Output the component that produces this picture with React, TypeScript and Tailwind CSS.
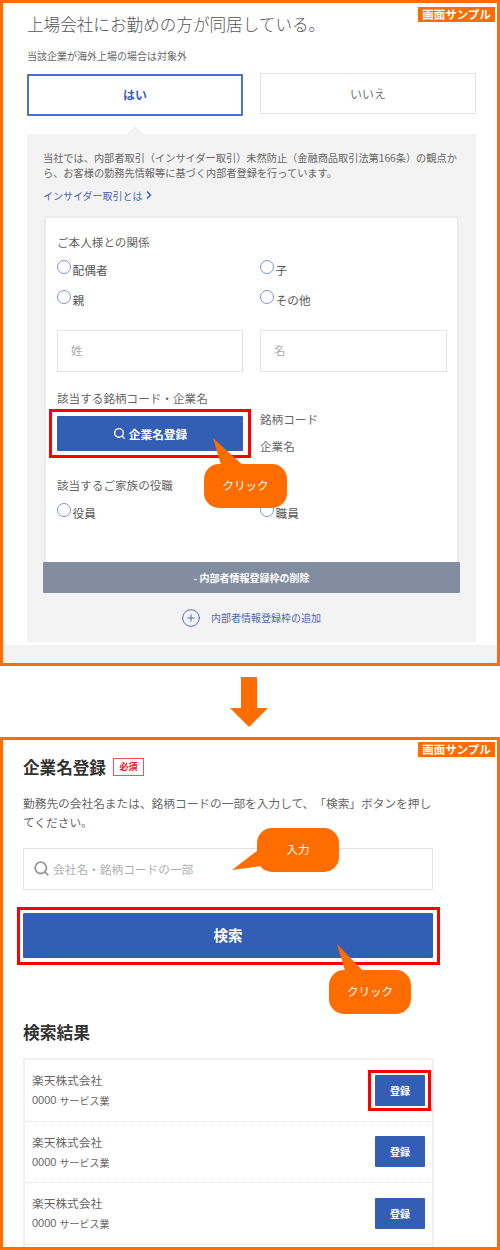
import { Search, ChevronRight, CirclePlus } from "lucide-react";

function SampleTag({ top }: { top: string }) {
  return (
    <div className={`absolute right-[2px] ${top} flex h-[15px] w-[77px] items-center justify-center bg-[#ff6c00] text-[11.5px] font-bold text-[#fff]`}>
      画面サンプル
    </div>
  );
}

function Radio({ label }: { label: string }) {
  return (
    <div className="flex h-[30px] items-center text-[11.7px] text-[#555]">
      <span className="mb-[6px] h-[13.5px] w-[13.5px] rounded-full border border-[#7b95d8] bg-white" />
      <span className="ml-[2px]">{label}</span>
    </div>
  );
}

function ResultRow() {
  return (
    <div className="flex h-[61.5px] items-center justify-between border-b border-dotted border-[#dddddd] pl-[7px] pr-[7px]">
      <div className="text-[#666]">
        <div className="h-[21px] text-[11.7px] leading-[21px]">楽天株式会社</div>
        <div className="flex h-[21px] items-center gap-[3px] text-[10px] leading-[21px]">
          <span className="font-['Liberation_Sans',sans-serif] text-[11px]">0000</span>
          <span>サービス業</span>
        </div>
      </div>
      <div className="flex h-[31px] w-[50px] items-center justify-center rounded-[1px] bg-[#335eb6] text-[10px] font-bold text-white">
        登録
      </div>
    </div>
  );
}

export default function App() {
  return (
    <div className="w-[500px] bg-white font-['Noto_Sans_CJK_JP','Liberation_Sans',sans-serif] [text-spacing-trim:space-all]">
      {/* Upper sample */}
      <section className="relative box-border flex h-[666px] flex-col border-[3px] border-[#ff6c00] bg-[#f3f3f3]">
        <div className="h-[642px] bg-white pl-[24px] pr-[21px]">
          <h1 className="h-[30px] translate-y-[6px] text-[16.6px] font-light leading-[30px] text-[#555]">
            上場会社にお勤めの方が同居している。
          </h1>
          <p className="mt-[13px] h-5 text-[10px] leading-5 text-[#666]">当該企業が海外上場の場合は対象外</p>
          <div className="mt-[7px] grid h-[43px] grid-cols-[216px_216px] items-start gap-x-[17px]">
            <div className="mt-px flex h-[42px] items-center justify-center rounded-[1px] border-2 border-[#4a72c6] text-[12px] font-bold text-[#3f64b8]">
              はい
            </div>
            <div className="flex h-[41px] items-center justify-center border-[1.5px] border-[#e2e2e2] text-[12px] text-[#777]">
              いいえ
            </div>
          </div>
          <div className="relative mt-[18px] h-[508px] bg-[#f3f3f3] px-[17px] pt-[16px]">
            <span className="absolute -top-[8px] left-[99px] h-0 w-0 border-x-[9px] border-b-[8px] border-x-transparent border-b-[#f3f3f3]" />
            <p className="-ml-px w-[418px] text-[10.2px] leading-[15px] text-[#666]">
              当社では、内部者取引（インサイダー取引）未然防止（金融商品取引法第166条）の観点から、お客様の勤務先情報等に基づく内部者登録を行っています。
            </p>
            <div className="mt-[5px] -ml-px flex h-5 items-center text-[10px] text-[#4a66b0]">
              インサイダー取引とは
              <ChevronRight size={12} strokeWidth={3.5} className="text-[#3f64b8]" />
            </div>
            <div className="mt-[11px] box-border h-[346px] border-2 border-b-0 border-[#ececec] bg-white pl-[11px] pr-[10px]">
              <div className="mt-[14px] h-5 text-[11.6px] leading-5 text-[#666]">ご本人様との関係</div>
              <div className="mt-[3px] grid grid-cols-[186px_187px] gap-x-[17px]">
                <Radio label="配偶者" />
                <Radio label="子" />
                <Radio label="親" />
                <Radio label="その他" />
              </div>
              <div className="mt-[15px] grid grid-cols-[186px_187px] gap-x-[17px]">
                <div className="flex h-[42px] items-center border-[1.5px] border-[#e4e4e4] pl-[13px] text-[11.5px] text-[#aaa]">姓</div>
                <div className="flex h-[42px] items-center border-[1.5px] border-[#e4e4e4] pl-[13px] text-[11.5px] text-[#aaa]">名</div>
              </div>
              <div className="mt-[16px] h-5 text-[11.6px] leading-5 text-[#666]">該当する銘柄コード・企業名</div>
              <div className="mt-[8px] grid h-[35px] grid-cols-[186px_187px] gap-x-[17px]">
                <div className="flex h-[35px] items-center justify-center gap-[3px] rounded-[1px] bg-[#335eb6] text-[11.7px] font-bold text-white">
                  <Search size={13} strokeWidth={2.5} />
                  企業名登録
                </div>
                <div className="-mt-[10px] text-[11.6px] leading-[27px] text-[#666]">
                  <div>銘柄コード</div>
                  <div>企業名</div>
                </div>
              </div>
              <div className="mt-[24px] h-5 text-[11.6px] leading-5 text-[#666]">該当するご家族の役職</div>
              <div className="mt-[3px] grid grid-cols-[186px_187px] gap-x-[17px]">
                <Radio label="役員" />
                <Radio label="職員" />
              </div>
            </div>
            <div className="-mx-px flex h-[31px] items-center justify-center rounded-[1px] bg-[#838da2] text-[10px] font-bold text-white">
              - 内部者情報登録枠の削除
            </div>
            <div className="flex h-[49px] items-center justify-center gap-[10px] pr-px text-[10px] text-[#5069b4]">
              <CirclePlus size={20} strokeWidth={1.1} className="text-[#4a66b0]" />
              内部者情報登録枠の追加
            </div>
          </div>
        </div>
        <div className="flex-1" />

        <SampleTag top="top-[4px]" />
        {/* highlight */}
        <div className="absolute left-[46px] top-[406px] h-[49px] w-[202px] border-[3px] border-[#ff0000]" />
        {/* callout */}
        <svg className="absolute left-[207px] top-[433px]" width="40" height="34" viewBox="0 0 40 34">
          <polygon points="3,2 12,32 36,32" fill="#ff6c00" />
        </svg>
        <div className="absolute left-[201px] top-[461px] flex h-[44px] w-[83px] items-center justify-center rounded-[15px] bg-[#ff6c00] text-[11.5px] text-white">
          クリック
        </div>
      </section>

      {/* Arrow */}
      <div className="flex h-[71px] justify-center pt-[11px]">
        <svg width="38" height="50" viewBox="0 0 38 50" className="-translate-x-px">
          <polygon points="11,0 27,0 27,31 38,31 19,50 0,31 11,31" fill="#ff6c00" />
        </svg>
      </div>

      {/* Lower sample */}
      <section className="relative box-border h-[513px] overflow-hidden border-[3px] border-[#ff6c00] bg-white pl-[20px]">
        <div className="mt-[15px] flex h-6 items-center">
          <h2 className="text-[16.6px] font-bold text-[#333]">企業名登録</h2>
          <span className="ml-[7px] flex h-[18px] w-[31px] items-center justify-center border border-[#f2505a] text-[9px] font-bold text-[#f01020]">
            必須
          </span>
        </div>
        <p className="mt-[14px] w-[412px] text-[11.7px] leading-[19px] text-[#666]">
          勤務先の会社名または、銘柄コードの一部を入力して、「検索」ボタンを押してください。
        </p>
        <div className="mt-[17px] flex h-[42px] w-[410px] items-center border-[1.5px] border-[#e4e4e4] pb-px pl-[9px] text-[11.7px] text-[#b0b0b0]">
          <Search size={17} strokeWidth={2.6} className="mr-[3px] text-[#999]" />
          会社名・銘柄コードの一部
        </div>
        <div className="mt-[23px] flex h-[45px] w-[410px] items-center justify-center rounded-[1px] bg-[#335eb6] pb-[2px] text-[14.5px] font-bold text-white">
          検索
        </div>
        <h2 className="mt-[62px] h-6 text-[16.8px] font-bold leading-6 text-[#333]">検索結果</h2>
        <div className="mt-[14px] h-[200px] w-[411px] border-2 border-[#f0f0f0]">
          <ResultRow />
          <ResultRow />
          <ResultRow />
        </div>

        <SampleTag top="top-[2px]" />
        {/* input callout */}
        <svg className="absolute left-[229px] top-[104px]" width="34" height="30" viewBox="0 0 34 30">
          <polygon points="0,26 30,3 30,22" fill="#ff6c00" />
        </svg>
        <div className="absolute left-[254px] top-[88px] flex h-[44px] w-[82px] items-center justify-center rounded-[15px] bg-[#ff6c00] text-[11.5px] text-white">
          入力
        </div>
        {/* search highlight */}
        <div className="absolute left-[14px] top-[167px] h-[58px] w-[423px] border-[3px] border-[#ff0000]" />
        <svg className="absolute left-[331px] top-[204px]" width="40" height="32" viewBox="0 0 40 32">
          <polygon points="3,0 12,30 32,30" fill="#ff6c00" />
        </svg>
        <div className="absolute left-[326px] top-[230px] flex h-[44px] w-[82px] items-center justify-center rounded-[15px] bg-[#ff6c00] text-[11.5px] text-white">
          クリック
        </div>
        {/* row highlight */}
        <div className="absolute left-[365px] top-[330px] h-[41px] w-[63px] border-[3px] border-[#ff0000]" />
      </section>
    </div>
  );
}
